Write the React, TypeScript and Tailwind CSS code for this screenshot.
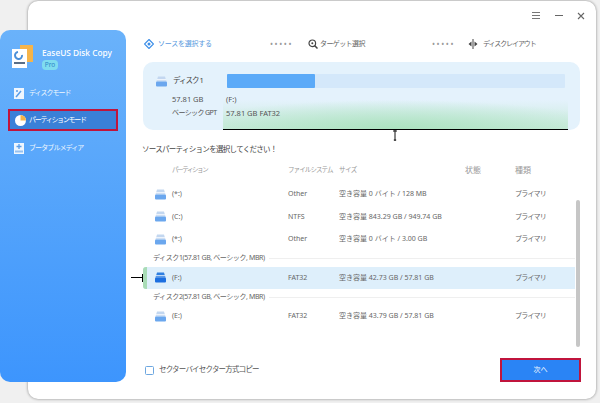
import React from "react";

const Disk = ({ dark = false }: { dark?: boolean }) => (
  <svg width="11" height="11" viewBox="0 0 11 11" className="shrink-0">
    <path d="M2 0.5h7l1.5 5h-10z" fill={dark ? "#2f7fe0" : "#c3d7f0"} />
    <rect x="0" y="5.5" width="11" height="5" rx="1" fill={dark ? "#1c6fe0" : "#6ba7ee"} />
    <rect x="1" y="3" width="9" height="1.3" fill="#fff" opacity="0.7" />
  </svg>
);

const Row = ({ name, fs, size, selected = false }: { name: string; fs: string; size: string; selected?: boolean }) => (
  <div className={`relative grid grid-cols-[11px_122px_51px_176px_1fr] items-center pl-[12px] h-[22.5px] text-[7px] text-[#666] ${selected ? "bg-[#deeffb] rounded-l-[3px]" : ""}`}>
    {selected && (
      <>
        <div className="absolute left-0 top-0 h-full w-[4px] rounded-l-[3px] bg-[#a9dcb6]" />
        <div className="absolute left-[-12px] top-[10px] h-[1.5px] w-[12px] bg-black" />
        <div className="absolute left-[-1px] top-[7px] h-[8px] w-px bg-black" />
      </>
    )}
    <Disk dark={selected} />
    <span className="pl-[6px]">{name}</span>
    <span>{fs}</span>
    <span>{size}</span>
    <span className="tracking-[-0.8px]">プライマリ</span>
  </div>
);

const Group = ({ label }: { label: string }) => (
  <div className="flex items-center h-[16px] pl-[10px] gap-[4px] text-[7px] text-[#666]">
    <span className="whitespace-nowrap tracking-[-0.4px]">{label}</span>
    <div className="flex-1 h-px bg-[#efefef]" />
  </div>
);

export default function App() {
  return (
    <div className="relative w-[600px] h-[403px] overflow-hidden bg-[#f0f0f0] font-['Noto_Sans','Noto_Sans_CJK_JP',sans-serif]">
      {/* window */}
      <div className="ml-[28px] mt-[1px] w-[568px] h-[398px] bg-white rounded-[10px] shadow-[0_0_3px_rgba(0,0,0,0.45)] flex flex-col">
        <div className="h-[29px] flex items-center justify-end gap-[14px] pr-[11px] text-[#555]">
          <svg width="8" height="7" viewBox="0 0 8 7"><path d="M0 .5h8M0 3.5h8M0 6.5h8" stroke="#777" strokeWidth="1" /></svg>
          <svg width="8" height="7" viewBox="0 0 8 7" className="ml-[1px]"><path d="M0 3.5h8" stroke="#666" strokeWidth="1" /></svg>
          <svg width="8" height="8" viewBox="0 0 8 8"><path d="M1 1l6 6M7 1l-6 6" stroke="#666" strokeWidth="1.1" /></svg>
        </div>

        {/* steps */}
        <div className="h-[28px] flex items-center pl-[116px] text-[7px] text-[#666]">
          <svg width="10" height="10" viewBox="0 0 10 10" className="shrink-0">
            <path d="M5 .5L9.5 5 5 9.5.5 5z" fill="none" stroke="#3d8fe8" strokeWidth="1.2" />
            <circle cx="5" cy="5" r="1.5" fill="#3d8fe8" />
          </svg>
          <span className="ml-[4px] w-[112px] text-[#5a9ade] whitespace-nowrap tracking-[-0.25px]">ソースを選択する</span>
          <span className="w-[38px] tracking-[1.6px] text-[8px] text-[#999] leading-none">•••••</span>
          <svg width="10" height="10" viewBox="0 0 10 10" className="shrink-0">
            <circle cx="4.3" cy="4.3" r="3.3" fill="none" stroke="#444" strokeWidth="1.2" />
            <path d="M6.8 6.8L9.5 9.5" stroke="#444" strokeWidth="1.5" />
            <circle cx="4.3" cy="4.3" r="1" fill="#444" />
          </svg>
          <span className="ml-[2px] w-[112px] whitespace-nowrap tracking-[-0.6px]">ターゲット選択</span>
          <span className="w-[36px] tracking-[1.6px] text-[8px] text-[#999] leading-none">•••••</span>
          <svg width="10" height="10" viewBox="0 0 10 10" className="shrink-0">
            <path d="M5 0v10" stroke="#444" strokeWidth="1" />
            <path d="M3.5 2.5v5L.5 5zM6.5 2.5v5l3-2.5z" fill="#444" />
          </svg>
          <span className="ml-[5px] whitespace-nowrap tracking-[-1.1px]">ディスクレイアウト</span>
        </div>

        {/* disk panel */}
        <div className="relative mt-[4px] ml-[115px] w-[437px] h-[68px] rounded-[10px] bg-[#e4f2fc] pt-[12px] pl-[13px] text-[7.5px] text-[#555]">
          <div className="absolute left-[80px] bottom-0 w-[345px] h-[30px] border-b-[1.5px] border-black bg-[radial-gradient(ellipse_65%_100%_at_50%_100%,rgba(170,226,190,0.95),rgba(170,226,190,0)),linear-gradient(to_bottom,rgba(190,232,205,0),rgba(190,232,205,0.7))]" />
          <div className="relative flex items-center h-[14px]">
            <Disk />
            <span className="ml-[6px] w-[54px] text-[#444] tracking-[-1px]">ディスク 1</span>
            <div className="flex-1 mr-[15px] h-[14px] bg-[#d4e8fa] rounded-[1px]">
              <div className="w-[88px] h-full bg-[#5baaf8] rounded-[1px]" />
            </div>
          </div>
          <div className="relative grid grid-cols-[54px_1fr] gap-y-[2px] pl-[16px] mt-[5px] leading-[12px]">
            <span>57.81 GB</span>
            <span>(F:)</span>
            <span className="whitespace-nowrap text-[7px] tracking-[-0.6px]">ベーシック GPT</span>
            <span>57.81 GB FAT32</span>
          </div>
        </div>

        <div className="h-[11px] ml-[362px]">
          <svg width="10" height="11" viewBox="0 0 10 11">
            <path d="M5 0v11" stroke="#111" strokeWidth="1" />
            <path d="M3 1h4M3.8 10h2.4" stroke="#111" strokeWidth="1" />
          </svg>
        </div>

        <div className="ml-[114px] h-[18px] flex items-center text-[7.5px] text-[#444] tracking-[-0.7px]">ソースパーティションを選択してください！</div>

        {/* table */}
        <div className="relative flex-1 ml-[115px] mr-[16px]">
          <div className="grid grid-cols-[116px_51px_126px_50px_1fr] pl-[29px] h-[18px] mt-[2px] items-center text-[6.5px] text-[#999]">
            <span className="tracking-[-1.4px]">パーティション</span>
            <span className="whitespace-nowrap tracking-[-0.9px]">ファイルシステム</span>
            <span className="tracking-[-0.5px]">サイズ</span>
            <span className="text-[8px]">状態</span>
            <span className="text-[8px]">種類</span>
          </div>
          <div className="mt-[4px] mr-[5px]">
            <Row name="(*:)" fs="Other" size="空き容量 0 バイト / 128 MB" />
            <Row name="(C:)" fs="NTFS" size="空き容量 843.29 GB / 949.74 GB" />
            <Row name="(*:)" fs="Other" size="空き容量 0 バイト / 3.00 GB" />
            <Group label="ディスク1(57.81 GB, ベーシック, MBR)" />
            <Row selected name="(F:)" fs="FAT32" size="空き容量 42.73 GB / 57.81 GB" />
            <Group label="ディスク2(57.81 GB, ベーシック, MBR)" />
            <Row name="(E:)" fs="FAT32" size="空き容量 43.79 GB / 57.81 GB" />
          </div>
          <div className="absolute right-0 top-[41px] w-[4px] h-[147px] rounded-full bg-[#c6c6c6]" />
        </div>

        {/* footer */}
        <div className="h-[41px] flex items-start justify-between ml-[117px] mr-[15px]">
          <label className="flex items-center gap-[5px] h-[24px] text-[7.5px] text-[#555] tracking-[-0.8px]">
            <span className="w-[9px] h-[9px] rounded-[1.5px] border border-[#6da7e0] bg-white" />
            セクターバイセクター方式コピー
          </label>
          <button className="w-[81px] h-[24px] bg-[#2a84f5] border-2 border-[#c0143c] text-white text-[7px]">次へ</button>
        </div>
      </div>

      {/* sidebar lying over the window */}
      <aside className="absolute left-0 top-[30px] w-[126px] h-[352px] rounded-[10px] bg-[linear-gradient(to_bottom,#6ab2fa,#3d95fd)] text-white">
        <div className="flex items-start pl-[12px] pt-[15px] h-[54px]">
          <svg width="21" height="23" viewBox="0 0 21 23" className="shrink-0">
            <rect x="8" y="0" width="13" height="17" fill="#f5b44a" />
            <rect x="0" y="4" width="15" height="19" fill="#fff" />
            <path d="M6 7a3.5 3.5 0 1 0 4 3" fill="none" stroke="#4a8fd8" strokeWidth="2" />
            <rect x="2" y="17" width="11" height="2" fill="#5a6f88" />
          </svg>
          <div className="ml-[9px] pt-[2px]">
            <div className="text-[8.3px] font-medium leading-[12px] whitespace-nowrap">EaseUS Disk Copy</div>
            <div className="mt-[1px] w-[16px] h-[10px] rounded-[4px] bg-[#7fdcf0] text-[#2c86c8] text-[6.5px] leading-[10px] text-center">Pro</div>
          </div>
        </div>
        <div className="flex items-center gap-[5px] pl-[14px] h-[14px] mt-[2px] text-[7px] opacity-90 tracking-[-1px]">
          <svg width="10" height="11" viewBox="0 0 10 11" className="shrink-0"><rect width="10" height="11" fill="#fff" /><path d="M2 9l5-6" stroke="#5a9de8" strokeWidth="1.5" /><circle cx="3" cy="3" r="1" fill="#5a9de8" /></svg>
          ディスクモード
        </div>
        <div className="flex items-center gap-[3px] ml-[8px] mt-[9px] w-[110px] h-[22px] pl-[5px] border-2 border-[#c0143c] bg-[#3a80d8] text-[7px] tracking-[-1.3px]">
          <svg width="11" height="11" viewBox="0 0 11 11" className="shrink-0"><circle cx="5.5" cy="5.5" r="5.5" fill="#fff" /><path d="M5.5 5.5V0a5.5 5.5 0 0 1 5.5 5.5z" fill="#f5b44a" /></svg>
          パーティションモード
        </div>
        <div className="flex items-center gap-[5px] pl-[14px] h-[14px] mt-[10px] text-[7px] opacity-90 tracking-[-0.9px]">
          <svg width="10" height="11" viewBox="0 0 10 11" className="shrink-0"><rect width="10" height="11" fill="#fff" /><path d="M5 1v5M2.5 3.5h5" stroke="#5a9de8" strokeWidth="1.3" /><rect x="1" y="7.5" width="8" height="2" fill="#9cc3ef" /></svg>
          ブータブルメディア
        </div>
      </aside>
    </div>
  );
}
